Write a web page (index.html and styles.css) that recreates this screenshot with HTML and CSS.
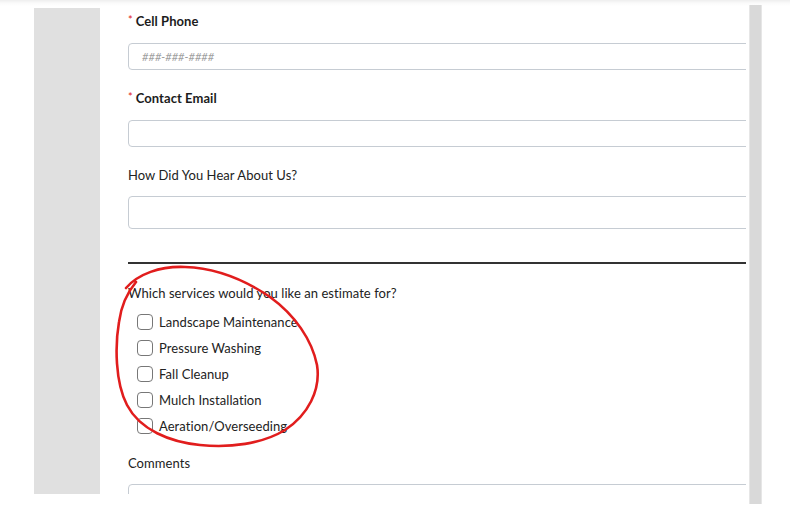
FILE: index.html
```html
<!DOCTYPE html>
<html lang="en">
<head>
<meta charset="utf-8">
<title>Estimate Form</title>
<link rel="stylesheet" href="styles.css">
</head>
<body>
<div class="stage">
  <div class="frame">
    <aside class="gutter"></aside>
    <main class="form">
      <div class="field">
        <div class="label strong"><span class="req">*</span>Cell Phone</div>
        <div class="input"><span class="ph">###-###-####</span></div>
      </div>
      <div class="field">
        <div class="label strong"><span class="req">*</span>Contact Email</div>
        <div class="input"></div>
      </div>
      <div class="field">
        <div class="label">How Did You Hear About Us?</div>
        <div class="input tall"></div>
      </div>
      <hr class="divider">
      <div class="label">Which services would you like an estimate for?</div>
      <ul class="checks">
        <li><span class="box"></span>Landscape Maintenance</li>
        <li><span class="box"></span>Pressure Washing</li>
        <li><span class="box"></span>Fall Cleanup</li>
        <li><span class="box"></span>Mulch Installation</li>
        <li><span class="box"></span>Aeration/Overseeding</li>
      </ul>
      <div class="label comments">Comments</div>
      <div class="input area"><span class="ph2">Enter text here...</span></div>
    </main>
  </div>
  <div class="scrollbar"></div>
</div>
<svg class="scribble" width="790" height="514" viewBox="0 0 790 514">
  <path d="M 126 288 C 138 274, 160 266, 185 267 C 215 268, 245 280, 270 297 C 295 315, 312 340, 317 365 C 321 390, 308 415, 285 430 C 262 444, 230 448, 200 445 C 170 442, 140 430, 127 405 C 115 382, 115 345, 119 322 C 121 307, 126 294, 136 282" fill="none" stroke="#e11d1d" stroke-width="2.6" stroke-linecap="round" stroke-linejoin="round"/>
</svg>
</body>
</html>
```

FILE: styles.css
```css
html, body {
  margin: 0;
  padding: 0;
}
body {
  width: 790px;
  height: 514px;
  overflow: hidden;
  background: linear-gradient(#eeeeee 0px, #fafafa 3px, #ffffff 6px);
  font-family: Lato, "Open Sans", Arial, sans-serif;
  color: #222;
  position: relative;
  letter-spacing: 0.06px;
}
.stage {
  display: flex;
  padding-top: 8px;
  padding-left: 34px;
}
.frame {
  width: 712px;
  height: 486px;
  overflow: hidden;
  display: flex;
  background: #fff;
}
.gutter {
  width: 66px;
  flex: none;
  background: #e0e0e0;
}
.form {
  flex: none;
  width: 640px;
  padding: 3px 0 0 28px;
}
.field {
  margin-bottom: 18px;
}
.label {
  font-size: 13px;
  line-height: 20px;
  color: #222;
}
.label.strong {
  font-weight: 700;
  color: #1c1c1c;
}
.req {
  color: #e02020;
  font-weight: 400;
  font-size: 11px;
  margin-right: 3px;
  position: relative;
  top: -2px;
}
.field .label {
  margin-bottom: 11px;
}
.input {
  box-sizing: border-box;
  height: 27px;
  width: 640px;
  border: 1px solid #c6ccd3;
  border-radius: 4px;
  display: flex;
  align-items: center;
  padding-left: 13px;
  background: #fff;
}
.input.tall {
  height: 33px;
}
.ph {
  font-size: 11px;
  font-style: italic;
  color: #a0a0a0;
}
.divider {
  margin: 33px 0 19px;
  border: 0;
  border-top: 2px solid #333;
  height: 0;
}
.checks {
  list-style: none;
  margin: 6px 0 0;
  padding: 0 0 0 9px;
}
.checks li {
  height: 26px;
  display: flex;
  align-items: center;
  gap: 6px;
  font-size: 13px;
  color: #222;
}
.box {
  box-sizing: border-box;
  width: 16px;
  height: 16px;
  border: 1.5px solid #777;
  border-radius: 4px;
  background: #fff;
}
.label.comments {
  margin-top: 14px;
  margin-bottom: 11px;
}
.input.area {
  height: 60px;
  align-items: flex-start;
  padding-top: 9px;
}
.ph2 {
  font-size: 12px;
  font-style: italic;
  color: #c8c8c8;
}
.scrollbar {
  flex: none;
  width: 13px;
  height: 499px;
  margin-top: -3px;
  margin-left: 3px;
  background: #d9d9d9;
  border-left: 1px solid #e6e6e6;
  border-right: 1px solid #e6e6e6;
  box-sizing: border-box;
}
.scribble {
  position: absolute;
  left: 0;
  top: 0;
  pointer-events: none;
}
```
